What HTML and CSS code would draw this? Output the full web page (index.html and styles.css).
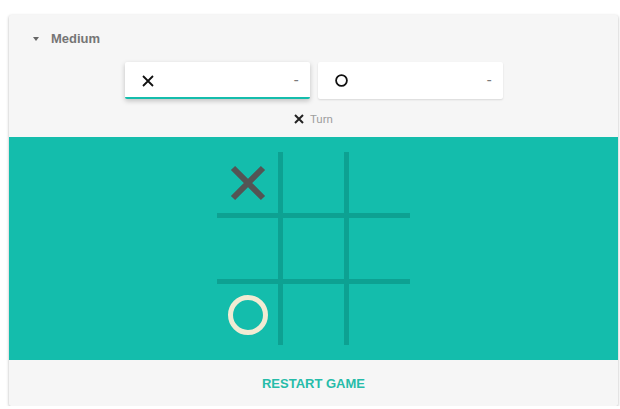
FILE: index.html
```html
<!DOCTYPE html>
<html>
<head>
  <title>Tic Tac Toe</title>
  <link rel="stylesheet" href="styles.css">
</head>
<body>
<div class="card">
  <div class="level">
    <span class="caret"></span>
    <span class="level-name">Medium</span>
  </div>

  <div class="players">
    <div class="player active">
      <svg class="mark" width="12" height="12" viewBox="0 0 12 12"><path d="M1 1L11 11M11 1L1 11" stroke="#111" stroke-width="1.8"/></svg>
      <span class="score">-</span>
    </div>
    <div class="player">
      <svg class="mark" width="13" height="13" viewBox="0 0 13 13"><circle cx="6.5" cy="6.5" r="5.4" fill="none" stroke="#111" stroke-width="1.8"/></svg>
      <span class="score">-</span>
    </div>
  </div>

  <div class="turn">
    <svg width="10" height="10" viewBox="0 0 10 10"><path d="M1 1L9 9M9 1L1 9" stroke="#222" stroke-width="2"/></svg>
    <span>Turn</span>
  </div>

  <div class="board">
    <div class="grid">
      <div class="cell">
        <svg width="38" height="38" viewBox="0 0 38 38"><path d="M4 4L34 34M34 4L4 34" stroke="#545454" stroke-width="6"/></svg>
      </div>
      <div class="cell"></div>
      <div class="cell"></div>
      <div class="cell"></div>
      <div class="cell"></div>
      <div class="cell"></div>
      <div class="cell">
        <svg width="42" height="42" viewBox="0 0 42 42"><circle cx="21" cy="21" r="17.5" fill="none" stroke="#f2ebd3" stroke-width="5"/></svg>
      </div>
      <div class="cell"></div>
      <div class="cell"></div>
    </div>
  </div>

  <div class="footer">
    <span class="restart">RESTART GAME</span>
  </div>
</div>
</body>
</html>
```

FILE: styles.css
```css
body {
  margin: 0;
  padding: 15px 0 0 9px;
  font-family: Roboto, "Liberation Sans", Arial, sans-serif;
  background-color: #ffffff;
}
.card {
  width: 609px;
  background-color: #f6f6f6;
  border-radius: 2px;
  box-shadow: 0 1px 3px rgba(0, 0, 0, 0.3);
  overflow: hidden;
}
.level {
  display: flex;
  align-items: center;
  padding: 16px 24px 0;
  height: 16px;
}
.caret {
  width: 0;
  height: 0;
  border-left: 3.5px solid transparent;
  border-right: 3.5px solid transparent;
  border-top: 4px solid #666;
  margin-right: 12px;
}
.level-name {
  font-family: "Liberation Sans", Arial, sans-serif;
  font-size: 13px;
  font-weight: bold;
  color: #757575;
  line-height: 16px;
}
.players {
  display: flex;
  justify-content: center;
  gap: 8px;
  margin-top: 15px;
}
.player {
  width: 185px;
  height: 37px;
  box-sizing: border-box;
  background-color: #ffffff;
  border-radius: 2px;
  display: flex;
  align-items: center;
  justify-content: space-between;
  padding: 0 11px 0 17px;
  box-shadow: 0 1px 2px rgba(0, 0, 0, 0.12);
}
.player.active {
  border-bottom: 2px solid #14bdac;
  padding-top: 2px;
  box-shadow: 0 2px 5px rgba(0, 0, 0, 0.22);
}
.score {
  font-size: 16px;
  color: #7a7a7a;
}
.turn {
  display: flex;
  justify-content: center;
  align-items: center;
  gap: 6px;
  height: 16px;
  margin: 12px 0 10px;
  font-size: 11.5px;
  color: #9e9e9e;
}
.board {
  background-color: #14bdac;
  padding: 15px 0;
  display: flex;
  justify-content: center;
}
.grid {
  display: grid;
  grid-template-columns: 61px 61px 61px;
  grid-template-rows: 61px 61px 61px;
  gap: 5px;
  background-color: #0da192;
}
.cell {
  background-color: #14bdac;
  display: flex;
  align-items: center;
  justify-content: center;
}
.footer {
  height: 46px;
  display: flex;
  align-items: center;
  justify-content: center;
}
.restart {
  font-family: "Liberation Sans", Arial, sans-serif;
  font-size: 13px;
  font-weight: bold;
  color: #26bca9;
}
```
